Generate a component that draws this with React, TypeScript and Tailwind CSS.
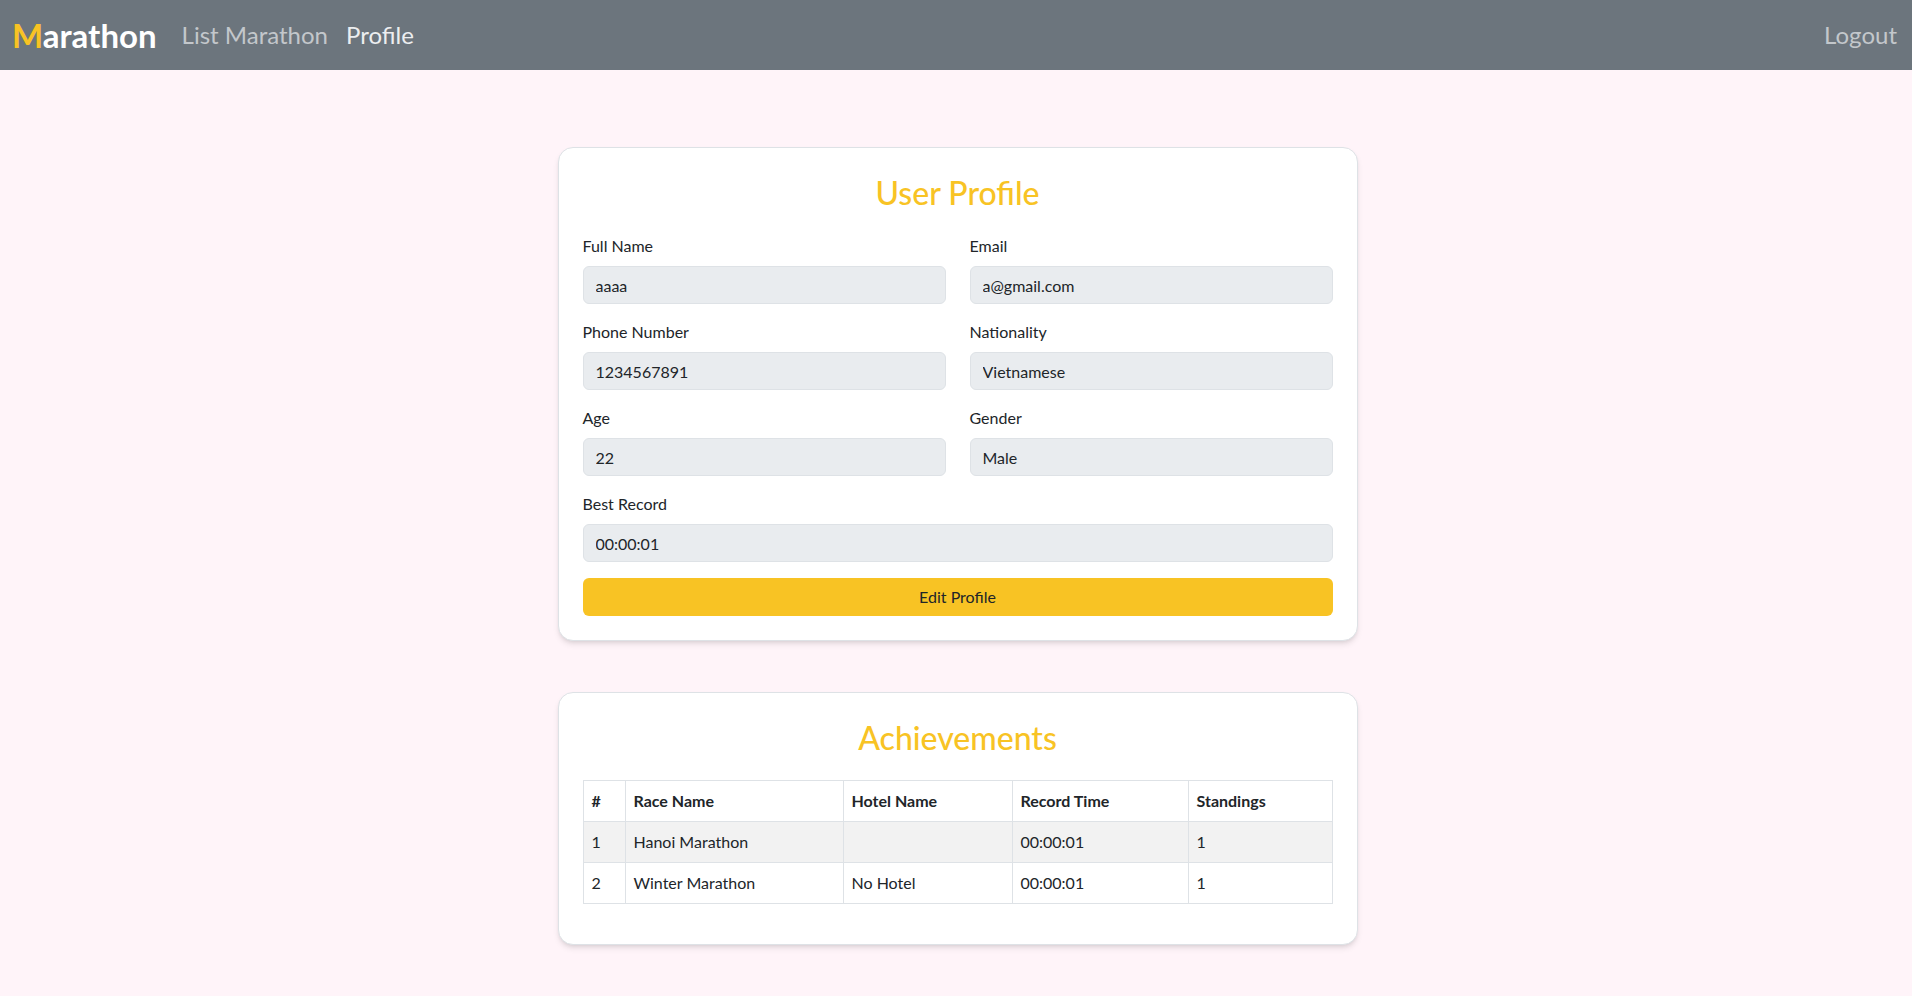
import React from 'react';

const fields = [
  { label: 'Full Name', value: 'aaaa' },
  { label: 'Email', value: 'a@gmail.com' },
  { label: 'Phone Number', value: '1234567891' },
  { label: 'Nationality', value: 'Vietnamese' },
  { label: 'Age', value: '22' },
  { label: 'Gender', value: 'Male' },
];

const achievements = [
  { id: 1, race: 'Hanoi Marathon', hotel: '', time: '00:00:01', standing: '1' },
  { id: 2, race: 'Winter Marathon', hotel: 'No Hotel', time: '00:00:01', standing: '1' },
];

const Field = ({ label, value, wide }: { label: string; value: string; wide?: boolean }) => (
  <div className={wide ? 'col-span-2 mb-4' : 'mb-4'}>
    <label className="block mb-2 leading-6 text-base text-[#212529]">{label}</label>
    <input
      readOnly
      value={value}
      className="block w-full h-[38px] px-3 rounded-[6px] bg-[#e9ecef] border border-[#dee2e6] text-base text-[#212529] outline-none"
    />
  </div>
);

const App = () => {
  return (
    <div className="min-h-screen bg-[#fff4f9] text-[#212529]" style={{ fontFamily: 'Lato, "Open Sans", sans-serif' }}>
      <nav className="h-[70px] bg-[#6c757d] flex items-center pl-3 pr-[15px]">
        <a className="text-[33px] font-bold text-white leading-none">
          <span className="text-[#f8c324]">M</span>arathon
        </a>
        <div className="flex items-center gap-[18px] ml-[25px] text-[24px]">
          <a className="text-[#c3c7cb]">List Marathon</a>
          <a className="text-[#eceef0]">Profile</a>
        </div>
        <a className="ml-auto text-[24px] text-[#c3c7cb]">Logout</a>
      </nav>

      <main className="pt-[77px] pb-10 pl-[3px] flex flex-col items-center gap-[51px]">
        <section className="w-[800px] bg-white border border-[#dee2e6] rounded-[15px] shadow-md p-6">
          <h2 className="text-center text-[32px] leading-[38px] font-medium text-[#f8c324] mt-[2px] mb-[22px]">User Profile</h2>
          <div className="grid grid-cols-2 gap-x-6">
            {fields.map((f) => (
              <Field key={f.label} label={f.label} value={f.value} />
            ))}
            <Field label="Best Record" value="00:00:01" wide />
          </div>
          <button className="block w-full h-[38px] rounded-[6px] bg-[#f8c324] text-base text-[#212529]">
            Edit Profile
          </button>
        </section>

        <section className="w-[800px] bg-white border border-[#dee2e6] rounded-[15px] shadow-md p-6">
          <h2 className="text-center text-[32px] leading-[38px] font-medium text-[#f8c324] mt-[2px] mb-[23px]">Achievements</h2>
          <table className="w-full border-collapse mb-4 text-base text-left">
            <thead>
              <tr>
                <th className="w-[42px] border border-[#dee2e6] px-2 py-2 leading-6 font-bold">#</th>
                <th className="w-[218px] border border-[#dee2e6] px-2 py-2 leading-6 font-bold">Race Name</th>
                <th className="w-[169px] border border-[#dee2e6] px-2 py-2 leading-6 font-bold">Hotel Name</th>
                <th className="w-[176px] border border-[#dee2e6] px-2 py-2 leading-6 font-bold">Record Time</th>
                <th className="border border-[#dee2e6] px-2 py-2 leading-6 font-bold">Standings</th>
              </tr>
            </thead>
            <tbody>
              {achievements.map((a, i) => (
                <tr key={a.id} className={i % 2 === 0 ? 'bg-[#f2f2f2]' : 'bg-white'}>
                  <td className="border border-[#dee2e6] px-2 py-2 leading-6">{a.id}</td>
                  <td className="border border-[#dee2e6] px-2 py-2 leading-6">{a.race}</td>
                  <td className="border border-[#dee2e6] px-2 py-2 leading-6">{a.hotel}</td>
                  <td className="border border-[#dee2e6] px-2 py-2 leading-6">{a.time}</td>
                  <td className="border border-[#dee2e6] px-2 py-2 leading-6">{a.standing}</td>
                </tr>
              ))}
            </tbody>
          </table>
        </section>
      </main>
    </div>
  );
};

export default App;
